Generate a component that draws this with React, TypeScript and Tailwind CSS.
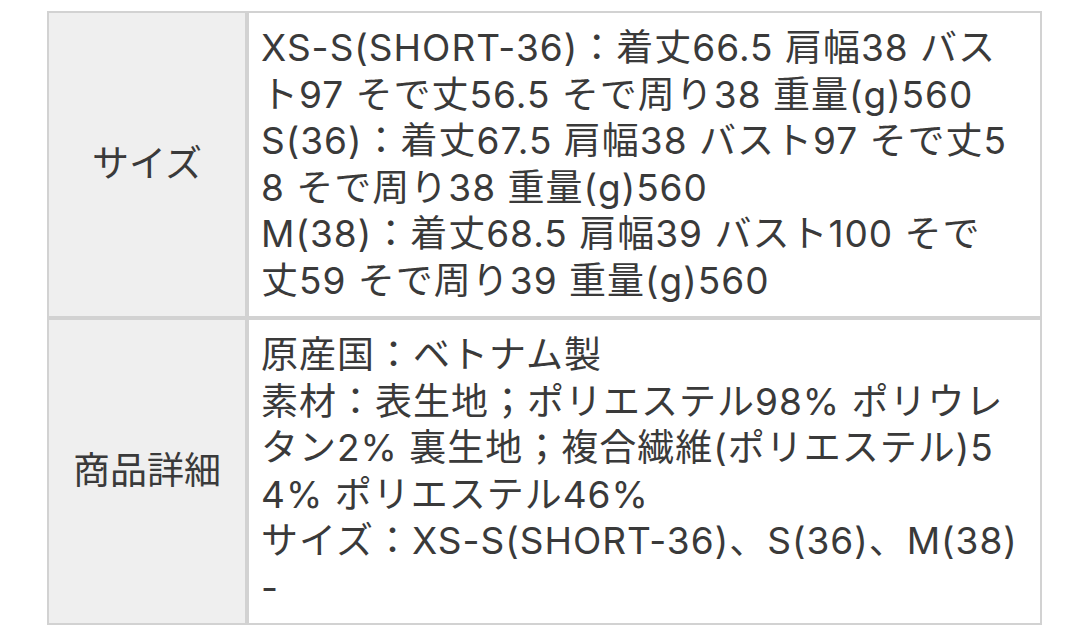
const sizeLines = [
  'XS-S(SHORT-36)：着丈66.5 肩幅38 バス',
  'ト97 そで丈56.5 そで周り38 重量(g)560',
  'S(36)：着丈67.5 肩幅38 バスト97 そで丈5',
  '8 そで周り38 重量(g)560',
  'M(38)：着丈68.5 肩幅39 バスト100 そで',
  '丈59 そで周り39 重量(g)560',
];

const detailLines = [
  '原産国：ベトナム製',
  '素材：表生地；ポリエステル98% ポリウレ',
  'タン2% 裏生地；複合繊維(ポリエステル)5',
  '4% ポリエステル46%',
  'サイズ：XS-S(SHORT-36)、S(36)、M(38)',
  '-',
];

function Row({ label, lines, first }: { label: string; lines: string[]; first?: boolean }) {
  return (
    <div className={`flex ${first ? '' : 'border-t-4 border-[#d2d2d2]'}`}>
      <div className="w-[200px] shrink-0 flex items-center justify-center bg-[#efefef] border-r-4 border-[#d2d2d2]">
        {label}
      </div>
      <div className="flex-1 bg-white pl-[12px] pr-2 py-[12px] tracking-[1px]">
        {lines.map((l, i) => (
          <div key={i} className="whitespace-nowrap">
            {l}
          </div>
        ))}
      </div>
    </div>
  );
}

export default function App() {
  return (
    <div
      className="w-[1080px] h-[630px] bg-white pt-[11px] pl-[47px]"
      style={{ fontFamily: 'Inter, "Noto Sans CJK JP", sans-serif' }}
    >
      <div className="w-[995px] border-2 border-[#d2d2d2] text-[37px] leading-[46.5px] text-[#3a3a3a]">
        <Row label="サイズ" lines={sizeLines} first />
        <Row label="商品詳細" lines={detailLines} />
      </div>
    </div>
  );
}
